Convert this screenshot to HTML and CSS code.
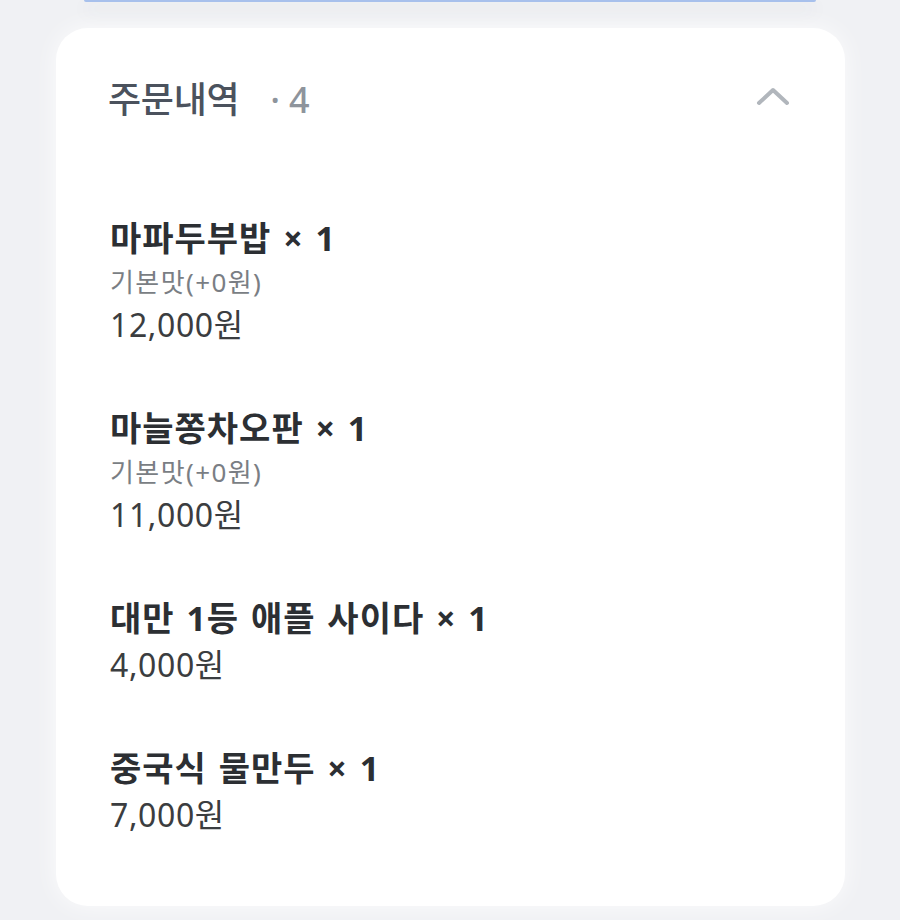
FILE: index.html
```html
<!DOCTYPE html>
<html lang="ko">
<head>
  <meta charset="UTF-8">
  <meta name="viewport" content="width=device-width, initial-scale=1">
  <title>주문내역</title>
  <link rel="stylesheet" href="styles.css">
</head>
<body>
  <div class="top-edge"></div>
  <section class="card">
    <div class="card-head">
      <h2 class="title">주문내역 <span class="count">· 4</span></h2>
      <svg class="chevron" width="34" height="20" viewBox="0 0 34 20" fill="none">
        <path d="M3 17 L17 4 L31 17" stroke="#b1b6bc" stroke-width="4" stroke-linecap="round" stroke-linejoin="round"/>
      </svg>
    </div>
    <ul class="items">
      <li class="item">
        <div class="name">마파두부밥 × 1</div>
        <div class="option">기본맛(+0원)</div>
        <div class="price">12,000원</div>
      </li>
      <li class="item">
        <div class="name">마늘쫑차오판 × 1</div>
        <div class="option">기본맛(+0원)</div>
        <div class="price">11,000원</div>
      </li>
      <li class="item">
        <div class="name">대만 1등 애플 사이다 × 1</div>
        <div class="price">4,000원</div>
      </li>
      <li class="item">
        <div class="name">중국식 물만두 × 1</div>
        <div class="price">7,000원</div>
      </li>
    </ul>
  </section>
</body>
</html>
```

FILE: styles.css
```css
body {
  margin: 0;
  background: #f0f1f4;
  font-family: 'Noto Sans', 'Noto Sans CJK KR', sans-serif;
  color: #333;
  height: 920px;
  overflow: hidden;
}
.top-edge {
  height: 2px;
  margin: 0 84px;
  background: #a7c0ec;
  border-radius: 0 0 4px 4px;
  box-shadow: 0 8px 18px rgba(60, 70, 90, 0.2);
}
.card {
  margin: 26px 55px 0 56px;
  background: #fff;
  border-radius: 32px;
  padding: 44px 55px 68px 52px;
  box-shadow: 0 0 24px rgba(255, 255, 255, 0.8);
}
.card-head {
  display: flex;
  align-items: center;
  justify-content: space-between;
  height: 50px;
}
.title {
  margin: 0;
  font-size: 36px;
  font-weight: 500;
  color: #4b525d;
  letter-spacing: -0.3px;
}
.count {
  color: #8e949c;
  margin-left: 22px;
}
.chevron {
  margin-top: -2px;
}
.items {
  list-style: none;
  margin: 92px 0 0;
  padding: 0;
}
.item {
  margin-bottom: 56px;
  padding-left: 2px;
}
.item:last-child {
  margin-bottom: 0;
}
.name {
  font-size: 34px;
  font-weight: 700;
  line-height: 48px;
  color: #2c2f33;
  letter-spacing: 1px;
  word-spacing: 2px;
}
.option {
  font-size: 26px;
  line-height: 40px;
  color: #7a7e84;
  letter-spacing: 1.4px;
}
.price {
  font-size: 32px;
  line-height: 46px;
  color: #3b3d40;
  letter-spacing: 0.6px;
}
```
